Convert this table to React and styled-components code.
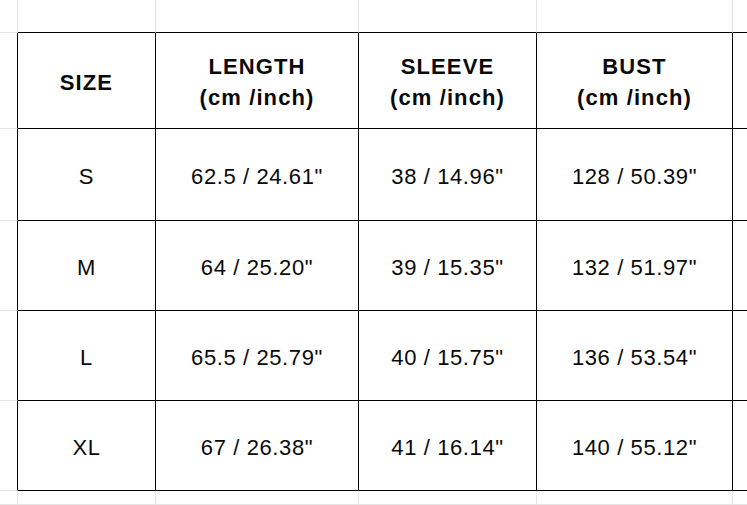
import React from "react";
import styled, { createGlobalStyle } from "styled-components";

const Global = createGlobalStyle`
  html, body { margin: 0; padding: 0; background: #ffffff; overflow: hidden; }
  body { font-family: "Liberation Sans", Arial, sans-serif; color: #000; }
`;

const FAINT = "#e4e4e4";
const INK = "#000000";

const Sheet = styled.div`
  display: grid;
  grid-template-columns: 18px 138px 203px 178px 196px 1fr;
  grid-template-rows: 33px 96px 92px 90px 90px 90px 1fr;
  width: 100vw;
  height: 100vh;
  overflow: hidden;
`;

const Cell = styled.div`
  box-sizing: border-box;
  min-width: 0;
  border-right: ${(p) => (p.$edge ? "none" : `1px solid ${p.$right ? INK : FAINT}`)};
  border-bottom: 1px solid ${(p) => (p.$bottom ? INK : FAINT)};
  display: flex;
  align-items: center;
  justify-content: center;
  text-align: center;
  padding-top: 3px;
  font-size: 22px;
  line-height: 31px;
  white-space: nowrap;
  color: #0a0a0a;
`;

const Head = styled.span`
  font-weight: 700;
  letter-spacing: 1.1px;
`;

const Value = styled.span`
  font-weight: 400;
  letter-spacing: 0.6px;
`;

const headers = [
  ["SIZE"],
  ["LENGTH", "(cm /inch)"],
  ["SLEEVE", "(cm /inch)"],
  ["BUST", "(cm /inch)"],
];

const rows = [
  ["S", '62.5 / 24.61"', '38 / 14.96"', '128 / 50.39"'],
  ["M", '64 / 25.20"', '39 / 15.35"', '132 / 51.97"'],
  ["L", '65.5 / 25.79"', '40 / 15.75"', '136 / 53.54"'],
  ["XL", '67 / 26.38"', '41 / 16.14"', '140 / 55.12"'],
];

export default function App() {
  const cols = 6;
  const cells = [];
  // top spacer row
  for (let c = 0; c < cols; c++) {
    cells.push(<Cell key={`t${c}`} $bottom={c > 0} $edge={c === cols - 1} />);
  }
  // header row
  cells.push(<Cell key="h0" $right />);
  headers.forEach((h, i) => {
    cells.push(
      <Cell key={`h${i + 1}`} $right $bottom>
        <Head>
          {h.map((line, j) => (
            <React.Fragment key={j}>
              {j > 0 && <br />}
              {line}
            </React.Fragment>
          ))}
        </Head>
      </Cell>
    );
  });
  cells.push(<Cell key="h5" $bottom $edge />);
  rows.forEach((r, ri) => {
    cells.push(<Cell key={`r${ri}-0`} $right />);
    r.forEach((v, ci) => {
      cells.push(
        <Cell key={`r${ri}-${ci + 1}`} $right $bottom>
          <Value>{v}</Value>
        </Cell>
      );
    });
    cells.push(<Cell key={`r${ri}-5`} $bottom $edge />);
  });
  // bottom spacer row
  for (let c = 0; c < cols; c++) {
    cells.push(<Cell key={`b${c}`} $edge={c === cols - 1} />);
  }
  return (
    <>
      <Global />
      <Sheet>{cells}</Sheet>
    </>
  );
}
